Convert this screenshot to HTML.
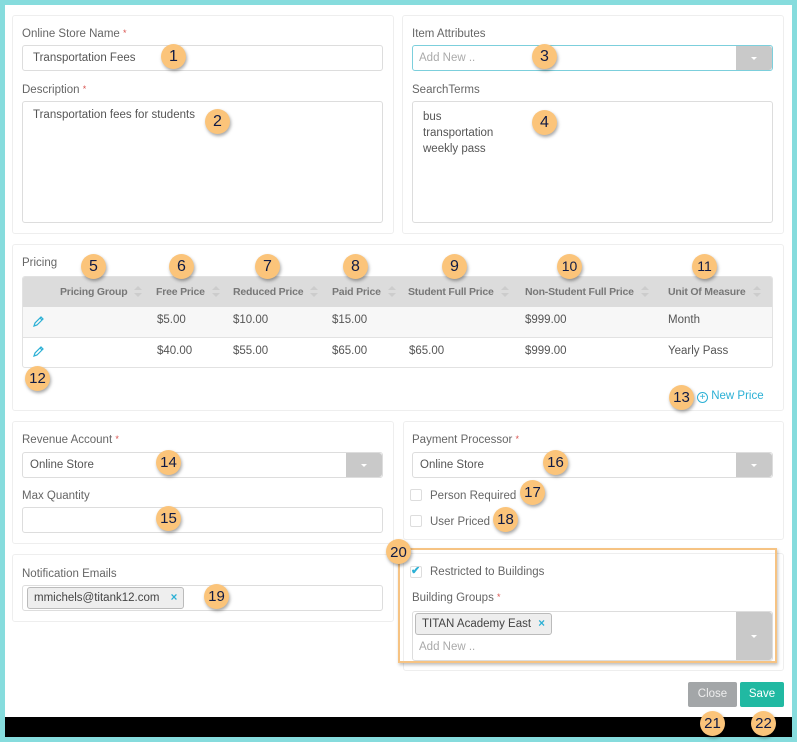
<!DOCTYPE html>
<html><head><meta charset="utf-8"><style>
*{box-sizing:border-box;margin:0;padding:0}
body{width:797px;height:742px;background:#86dcdd;position:relative;overflow:hidden;font-family:"Liberation Sans",sans-serif;font-size:11px;color:#555}
.a{position:absolute}
#w{left:5px;top:5px;width:787px;height:712px;background:#fff}
#blk{left:5px;top:717px;width:787px;height:20px;background:#000}
.p{position:absolute;border:1px solid #eee;border-radius:3px;background:#fff}
.lbl{position:absolute;font-size:11.5px;color:#666;margin-top:2px}
.lbl i{color:#d9534f;font-style:normal;font-size:9px;vertical-align:top}
.in{position:absolute;border:1px solid #ddd;border-radius:3px;background:#fff;font-size:11.5px;color:#555;padding-left:10px}
.dd{position:absolute;right:0;top:0;bottom:0;width:36px;background:#c9c9c9;border-radius:0 3px 3px 0}
.dd:after{content:"";position:absolute;left:15px;top:50%;margin-top:-1px;border:3px solid transparent;border-top:3px solid #fff}
.b{position:absolute;width:25px;height:25px;border-radius:50%;background:#fbc47a;box-shadow:1px 2px 3px rgba(0,0,0,.35);color:#0f1a45;font-size:16px;text-align:center;line-height:25px;font-family:"Liberation Sans",sans-serif}
.th{position:absolute;top:0;line-height:30px;font-weight:bold;color:#777;font-size:10.5px;letter-spacing:-0.2px}
.th:after{content:"";position:absolute;right:-15px;top:9px;width:0;height:0;border:4px solid transparent;border-bottom:4px solid #ccc;border-top:0}
.th:before{content:"";position:absolute;right:-15px;top:16px;width:0;height:0;border:4px solid transparent;border-top:4px solid #ccc;border-bottom:0}
.td{position:absolute;font-size:11.5px;color:#555}
.cb{position:absolute;width:12px;height:12px;border:1px solid #ddd;border-radius:2px;background:#fff}
.tag{position:absolute;border:1px solid #bbb;border-radius:3px;background:#eee;font-size:11.5px;color:#444;padding:0 6px;line-height:20px}
.tag b{color:#2bb0d5;margin-left:8px}
</style></head><body>
<div id="w" class="a"></div>
<div id="blk" class="a"></div>

<div class="p" style="left:12px;top:15px;width:382px;height:219px"></div>
<div class="lbl" style="left:22px;top:26px">Online Store Name <i>*</i></div>
<div class="in" style="left:22px;top:45px;width:361px;height:26px;line-height:25px">Transportation Fees</div>
<div class="lbl" style="left:22px;top:82px">Description <i>*</i></div>
<div class="in" style="left:22px;top:101px;width:361px;height:122px;padding-top:7px">Transportation fees for students</div>
<div class="b" style="left:161px;top:44px">1</div>
<div class="b" style="left:205px;top:109px">2</div>

<div class="p" style="left:402px;top:15px;width:382px;height:219px"></div>
<div class="lbl" style="left:412px;top:26px">Item Attributes</div>
<div class="in" style="left:412px;top:45px;width:361px;height:26px;line-height:25px;border-color:#7ccfdc;color:#aaa;padding-left:6px">Add New ..<div class="dd"></div></div>
<div class="lbl" style="left:412px;top:82px">SearchTerms</div>
<div class="in" style="left:412px;top:101px;width:361px;height:122px;padding-top:7px;line-height:16px">bus<br>transportation<br>weekly pass</div>
<div class="b" style="left:532px;top:44px">3</div>
<div class="b" style="left:532px;top:110px">4</div>

<div class="p" style="left:12px;top:244px;width:772px;height:167px"></div>
<div class="lbl" style="left:22px;top:255px">Pricing</div>
<div class="a" style="left:22px;top:276px;width:751px;height:92px;border:1px solid #e2e2e2;border-radius:3px;overflow:hidden">
 <div class="a" style="left:0;top:0;width:751px;height:30px;background:#dcdcdc"></div>
 <div class="a" style="left:0;top:30px;width:751px;height:31px;background:#f7f7f7;border-bottom:1px solid #e2e2e2"></div>
 <div class="th" style="left:37px">Pricing Group</div>
 <div class="th" style="left:133px">Free Price</div>
 <div class="th" style="left:210px">Reduced Price</div>
 <div class="th" style="left:309px">Paid Price</div>
 <div class="th" style="left:385px">Student Full Price</div>
 <div class="th" style="left:502px">Non-Student Full Price</div>
 <div class="th" style="left:645px">Unit Of Measure</div>
 <div class="td" style="left:134px;top:37px">$5.00</div>
 <div class="td" style="left:210px;top:37px">$10.00</div>
 <div class="td" style="left:309px;top:37px">$15.00</div>
 <div class="td" style="left:502px;top:37px">$999.00</div>
 <div class="td" style="left:645px;top:37px">Month</div>
 <div class="td" style="left:134px;top:68px">$40.00</div>
 <div class="td" style="left:210px;top:68px">$55.00</div>
 <div class="td" style="left:309px;top:68px">$65.00</div>
 <div class="td" style="left:386px;top:68px">$65.00</div>
 <div class="td" style="left:502px;top:68px">$999.00</div>
 <div class="td" style="left:645px;top:68px">Yearly Pass</div>
 <svg class="a" style="left:9px;top:38px" width="13" height="13" viewBox="0 0 13 13"><path d="M2 11 L3 8 L9 2 L11 4 L5 10 Z M8 3 L10 5" fill="none" stroke="#2bb0d5" stroke-width="1.2"/></svg>
 <svg class="a" style="left:9px;top:68px" width="13" height="13" viewBox="0 0 13 13"><path d="M2 11 L3 8 L9 2 L11 4 L5 10 Z M8 3 L10 5" fill="none" stroke="#2bb0d5" stroke-width="1.2"/></svg>
</div>
<div class="b" style="left:81px;top:254px">5</div>
<div class="b" style="left:169px;top:254px">6</div>
<div class="b" style="left:255px;top:254px">7</div>
<div class="b" style="left:343px;top:254px">8</div>
<div class="b" style="left:442px;top:254px">9</div>
<div class="b" style="left:557px;top:254px;font-size:14px">10</div>
<div class="b" style="left:692px;top:254px;font-size:14px">11</div>
<div class="b" style="left:25px;top:366px;font-size:15px">12</div>
<div class="b" style="left:669px;top:385px;font-size:15px">13</div>
<div class="a" style="left:697px;top:390px;color:#2bb0d5;font-size:11.5px"><span style="display:inline-block;width:11px;height:11px;border:1px solid #2bb0d5;border-radius:50%;font-size:10px;line-height:9px;text-align:center;vertical-align:-1px">+</span> New Price</div>

<div class="p" style="left:12px;top:421px;width:382px;height:123px"></div>
<div class="lbl" style="left:22px;top:432px">Revenue Account <i>*</i></div>
<div class="in" style="left:22px;top:452px;width:361px;height:26px;line-height:25px;padding-left:7px">Online Store<div class="dd"></div></div>
<div class="lbl" style="left:22px;top:488px">Max Quantity</div>
<div class="in" style="left:22px;top:507px;width:361px;height:26px"></div>
<div class="b" style="left:156px;top:450px;font-size:15px">14</div>
<div class="b" style="left:156px;top:506px;font-size:15px">15</div>

<div class="p" style="left:12px;top:554px;width:382px;height:68px"></div>
<div class="lbl" style="left:22px;top:566px">Notification Emails</div>
<div class="in" style="left:22px;top:585px;width:361px;height:26px;padding:0"></div>
<div class="tag" style="left:27px;top:587px">mmichels@titank12.com <b>×</b></div>
<div class="b" style="left:204px;top:584px;font-size:15px">19</div>

<div class="p" style="left:403px;top:421px;width:381px;height:119px"></div>
<div class="lbl" style="left:412px;top:432px">Payment Processor <i>*</i></div>
<div class="in" style="left:412px;top:452px;width:361px;height:26px;line-height:25px;padding-left:7px">Online Store<div class="dd"></div></div>
<div class="cb" style="left:410px;top:489px"></div>
<div class="lbl" style="left:430px;top:488px">Person Required</div>
<div class="cb" style="left:410px;top:515px"></div>
<div class="lbl" style="left:430px;top:514px">User Priced</div>
<div class="b" style="left:543px;top:450px;font-size:15px">16</div>
<div class="b" style="left:520px;top:480px;font-size:15px">17</div>
<div class="b" style="left:493px;top:507px;font-size:15px">18</div>

<div class="p" style="left:403px;top:553px;width:381px;height:118px"></div>
<div class="a" style="left:398px;top:548px;width:379px;height:115px;border:2px solid #f6c383;box-shadow:1px 2px 3px rgba(0,0,0,.25)"></div>
<div class="cb" style="left:410px;top:566px"></div>
<div class="a" style="left:411px;top:564px;color:#2bb0d5;font-size:11px;font-weight:bold">✔</div>
<div class="lbl" style="left:430px;top:564px">Restricted to Buildings</div>
<div class="lbl" style="left:412px;top:590px">Building Groups <i>*</i></div>
<div class="in" style="left:412px;top:611px;width:361px;height:50px;padding:0"><div class="dd"></div></div>
<div class="tag" style="left:415px;top:613px">TITAN Academy East <b style="margin-left:4px">×</b></div>
<div class="a" style="left:419px;top:641px;color:#aaa;font-size:11.5px">Add New ..</div>
<div class="b" style="left:386px;top:539px;font-size:15px;line-height:27px">20</div>

<div class="a" style="left:688px;top:682px;width:49px;height:25px;background:#a3a6a8;border-radius:2px;color:#eee;font-size:11.5px;text-align:center;line-height:25px">Close</div>
<div class="a" style="left:740px;top:682px;width:44px;height:25px;background:#21b9a2;border-radius:2px;color:#fff;font-size:11.5px;text-align:center;line-height:25px">Save</div>
<div class="b" style="left:700px;top:711px;font-size:15px">21</div>
<div class="b" style="left:751px;top:711px;font-size:15px">22</div>
</body></html>
